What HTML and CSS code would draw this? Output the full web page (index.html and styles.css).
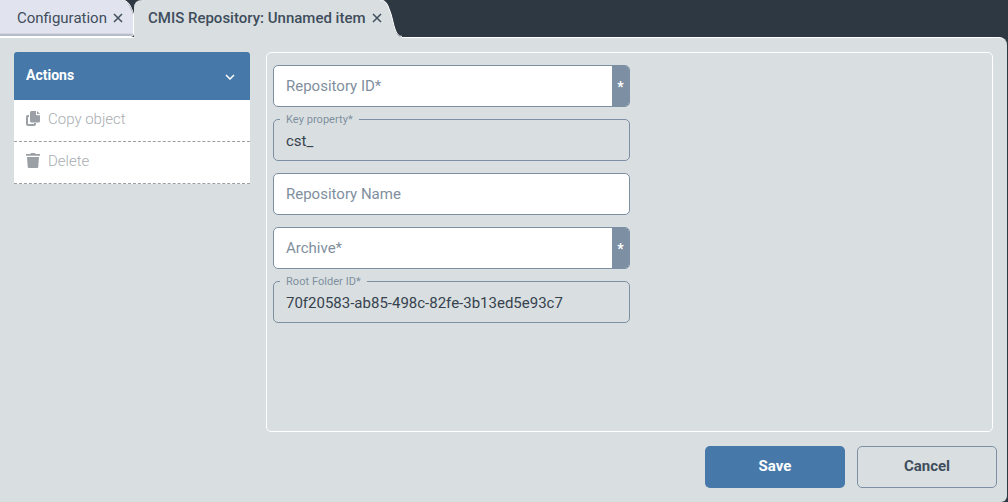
FILE: index.html
```html
<!DOCTYPE html>
<html lang="en">
<head>
<meta charset="utf-8">
<title>CMIS Repository</title>
<link rel="stylesheet" href="styles.css">
</head>
<body>
<div class="app">
  <div class="tabs">
    <div class="tab tab-inactive">
      <svg class="tab-bg" viewBox="0 0 134 38"><path class="tab-fill-inactive" d="M0 0H121C128 0 130 6 133 14V36H0Z"/><path class="tab-shade-soft" d="M0 33.500H133"/><path class="tab-shade" d="M0 35H133"/><path class="tab-edge" d="M0 36.500H131Q133.500 36.500 133.500 34V14C131 6 128 0 122 0"/></svg>
      <span class="tab-label">Configuration</span><svg class="close" viewBox="0 0 10 10"><path d="M1 1 9 9M9 1 1 9"/></svg>
    </div>
    <div class="tab tab-active">
      <svg class="tab-bg" viewBox="0 0 268 38"><path class="tab-fill-active" d="M0 38V8Q0 0 8 0H246C253 0 254 6 257 14C260 24 261 37 268 37V38Z"/><path class="tab-edge" d="M246 0C253 0 254 6 257 14C260 24 261 36.500 268 36.500"/></svg>
      <span class="tab-label">CMIS Repository: Unnamed item</span><svg class="close" viewBox="0 0 10 10"><path d="M1 1 9 9M9 1 1 9"/></svg>
    </div>
  </div>
  <div class="panel">
    <div class="main">
      <aside class="actions">
        <div class="actions-head"><span>Actions</span><svg class="chev" viewBox="0 0 10 6"><path d="M1 1 5 5 9 1"/></svg></div>
        <div class="action"><svg class="icon" viewBox="0 0 14 15"><path class="icon-line" d="M3 5H2A1 1 0 0 0 1 6V13A1 1 0 0 0 2 14H8A1 1 0 0 0 9 13V12"/><path d="M5.500 0H10V3.500A.8.800 0 0 0 10.800 4.300H14V10A1.500 1.500 0 0 1 12.500 11.500H5.500A1.500 1.500 0 0 1 4 10V1.500A1.500 1.500 0 0 1 5.500 0Z"/><path d="M11 0 14 3H11Z"/></svg><span>Copy object</span></div>
        <div class="action"><svg class="icon" viewBox="0 0 14 15"><path d="M5 0H9L9.600 1H14V2.800H0V1H4.400Z"/><path d="M1 4H13L12.300 13.800A1.300 1.300 0 0 1 11 15H3A1.300 1.300 0 0 1 1.700 13.800Z"/></svg><span>Delete</span></div>
      </aside>
      <section class="form-area">
        <div class="form">
          <div class="field field-addon"><span class="placeholder">Repository ID*</span><span class="addon">*</span></div>
          <div class="field field-filled"><span class="legend">Key property*</span><span class="value">cst_</span></div>
          <div class="field"><span class="placeholder">Repository Name</span></div>
          <div class="field field-addon"><span class="placeholder">Archive*</span><span class="addon">*</span></div>
          <div class="field field-filled"><span class="legend">Root Folder ID*</span><span class="value">70f20583-ab85-498c-82fe-3b13ed5e93c7</span></div>
        </div>
      </section>
    </div>
    <div class="footer">
      <button class="btn btn-primary" type="button">Save</button>
      <button class="btn btn-secondary" type="button">Cancel</button>
    </div>
  </div>
</div>
</body>
</html>
```
FILE: styles.css
```css
* { box-sizing: border-box; }
html, body { margin: 0; padding: 0; }
body { width: 1008px; height: 502px; overflow: hidden; background: #2d3843; font-family: Roboto, "Liberation Sans", sans-serif; }
.app { display: flex; flex-direction: column; height: 502px; }
.tabs { display: flex; height: 37px; flex: none; position: relative; z-index: 1; }
.tab { position: relative; display: flex; align-items: center; height: 38px; font-size: 15px; color: #3f4d5c; }
.tab-inactive { width: 134px; padding: 0 0 2px 17px; }
.tab-active { width: 268px; padding: 0 0 2px 14px; font-weight: 500; }
.tab-bg { position: absolute; left: 0; top: 0; width: 100%; height: 100%; }
.tab-fill-inactive { fill: #e1e4ee; }
.tab-fill-active { fill: #d9dfe1; }
.tab-shade-soft { fill: none; stroke: #d3d7e2; stroke-width: 1; }
.tab-shade { fill: none; stroke: #b7bccb; stroke-width: 2; }
.tab-edge { fill: none; stroke: #fff; stroke-width: 1; }
.tab-label { position: relative; }
.close { position: relative; width: 10px; height: 10px; margin-left: 6px; flex: none; fill: none; stroke: #3f4d5c; stroke-width: 1.5; }
.panel { flex: 1; display: flex; flex-direction: column; margin-right: 1px; background: #d9dfe1; border-top: 1px solid #fff; border-radius: 0 8px 6px 0; padding: 14px 10px 14px 14px; }
.main { flex: 1; display: flex; gap: 16px; min-height: 0; margin-right: 4px; }
.actions { width: 236px; flex: none; align-self: flex-start; }
.actions-head { display: flex; align-items: center; justify-content: space-between; height: 48px; padding: 0 15px 2px 12px; background: #4679a9; color: #fff; font-size: 14px; font-weight: 700; border-radius: 3px 3px 0 0; }
.chev { width: 10px; height: 6px; margin-top: 3px; fill: none; stroke: #fff; stroke-width: 1.5; }
.action { display: flex; align-items: center; gap: 8px; height: 42px; padding: 0 0 4px 12px; background: #fff; border-bottom: 1px dashed #9a9fa5; color: #a9adb2; font-size: 15px; font-weight: 300; }
.icon { width: 14px; height: 15px; fill: #9aa0a6; flex: none; }
.icon-line { fill: none; stroke: #9aa0a6; stroke-width: 2; }
.form-area { flex: 1; border: 1px solid #fff; border-radius: 5px; padding: 12px 6px; }
.form { display: flex; flex-direction: column; gap: 12px; width: 357px; }
.field { position: relative; display: flex; align-items: center; height: 42px; padding: 0 12px; background: #fff; border: 1px solid #7d8fa3; border-radius: 5px; font-size: 15px; }
.placeholder { color: #808f9e; }
.field-addon { overflow: hidden; }
.addon { position: absolute; top: 0; right: 0; bottom: 0; width: 17px; display: flex; align-items: center; justify-content: center; padding-top: 2px; background: #7d8fa3; color: #fff; font-weight: 700; font-size: 14px; }
.field-filled { background: #d9dfe1; }
.legend { position: absolute; left: 6px; top: -7px; padding: 0 6px; background: #d9dfe1; color: #808f9e; font-size: 11px; letter-spacing: 0.05px; line-height: 13px; }
.value { color: #36424e; margin-top: 1px; }
.footer { display: flex; justify-content: flex-end; gap: 12px; flex: none; padding-top: 14px; }
.btn { width: 140px; height: 42px; border-radius: 5px; font: 700 15px Roboto, "Liberation Sans", sans-serif; padding: 0 0 2px; }
.btn-primary { background: #4679a9; border: 0; color: #fff; }
.btn-secondary { background: #d9dfe1; border: 1px solid #7d8fa3; color: #3f4d5c; }
```
